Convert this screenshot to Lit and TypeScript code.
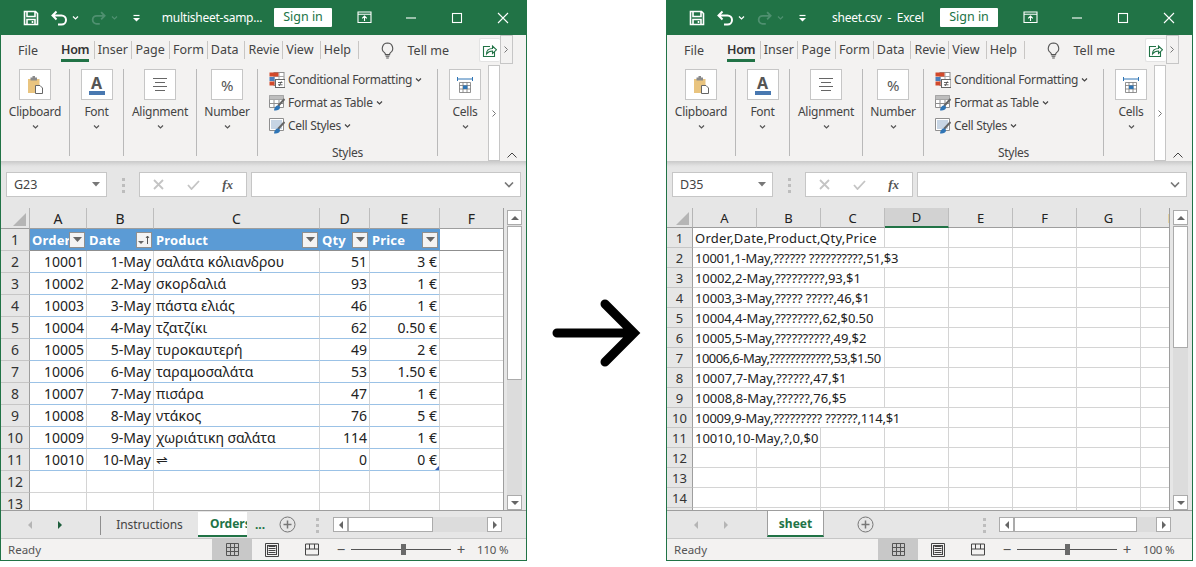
import { LitElement, html, css, svg, nothing } from "lit";
import { customElement, property } from "lit/decorators.js";

type Cell = { t?: string; k?: string; span?: number; filter?: string; ls?: number };
interface Cfg {
  title: string; zoom: string; thumbV: number; sliderX: number;
  nextDim: boolean; cols: number[]; headW: number; headH: number; rowH: number;
  letters: string[]; sel: number; rows: Cell[][]; fs: number; name: string;
  tabs: "multi" | "single"; hsW: number; hsThumb: number; table: boolean;
}

const ic = {
  save: svg`<path d="M1.500 1.500h11l2 2v11h-13z M4 1.500v5h8v-5 M4 14.500v-5h8v5 M9.500 11v2" fill="none" stroke="currentColor" stroke-width="1.6"/>`,
  undo: svg`<path d="M5.500 1.500 1.500 5.500l4 4M2 5.500h8.500a4.500 4.500 0 0 1 0 9H7" fill="none" stroke="currentColor" stroke-width="2"/>`,
  caret: svg`<path d="M1 2.500 3.500 5 6 2.500" fill="none" stroke="currentColor" stroke-width="1.2"/>`,
  cust: svg`<path d="M0.500 1.500h6" stroke="currentColor" stroke-width="1.2"/><path d="M0 4h7L3.500 7.500z" fill="currentColor"/>`,
  disp: svg`<path d="M1 1h13v10.500H1zM1 3.200h13M7.500 10V5.200M5.200 7.300l2.300-2.300 2.300 2.300" fill="none" stroke="currentColor" stroke-width="1.1"/>`,
  min: svg`<path d="M1 6h10" stroke="currentColor" stroke-width="1.1"/>`,
  max: svg`<rect x="1.500" y="1.500" width="9" height="9" fill="none" stroke="currentColor" stroke-width="1.1"/>`,
  close: svg`<path d="M1 1l10 10M11 1 1 11" stroke="currentColor" stroke-width="1.1"/>`,
  bulb: svg`<path d="M7.500 1a5.300 5.300 0 0 0-3 9.600c.7.600.9 1.300.9 2h4.200c0-.7.200-1.400.9-2A5.300 5.300 0 0 0 7.500 1zM5.600 14.200h3.800M6.200 16h2.600" fill="none" stroke="#555" stroke-width="1.1"/>`,
  share: svg`<path d="M8 3.500H1.500v10h11V9" fill="none" stroke="#217346" stroke-width="1.1"/><path d="M4.500 11c0-4 2.500-5.500 6-5.500V3l4 3.800-4 3.700V8c-3 0-4.500 1-6 3z" fill="#fff" stroke="#217346" stroke-width="1.1"/>`,
  clip: svg`<rect x="1" y="4" width="11.500" height="14" fill="#e9c47f"/><rect x="3.500" y="2.500" width="6.500" height="3" fill="#8a8a8a"/><rect x="5.500" y="1" width="2.500" height="2.500" fill="#8a8a8a"/><path d="M8.500 10.500h4.500l2.500 2.500v5.500h-7z" fill="#fff" stroke="#666" stroke-width="1"/>`,
  align: svg`<path d="M1 1.500h14M3 5.500h10M1 9.500h14M3 13.500h10" stroke="#666" stroke-width="1"/>`,
  cond: svg`<rect x="5" y=".5" width="10" height="13" fill="#fff" stroke="#8f8f8f"/><path d="M5 4.500h10M5 9h10M10 .5v13" stroke="#a8a8a8"/><rect x=".5" y=".5" width="9" height="4" fill="#d2492a"/><rect x=".5" y="5" width="5" height="4" fill="#4a7ebb"/><rect x=".5" y="9.500" width="5" height="4" fill="#d2492a"/><rect x="6.500" y="7.500" width="9.500" height="8" fill="#fff" stroke="#666"/><path d="M9 10.500h4.500M9 12.800h4.500M12.400 9.400l-2.200 4.600" stroke="#444" stroke-width=".8"/>`,
  table: svg`<path d="M.5.5h14v12H.5zM.5 4.500h14M.5 8.500h14M5 .5v12M10 .5v12" fill="#fff" stroke="#8f8f8f"/><rect x=".5" y=".5" width="14" height="4" fill="#bdbdbd"/><path d="M15.500 4 9 11" stroke="#666" stroke-width="2"/><path d="M5 15.500c0-3 2-5 4-5s2.500 2 1.500 3.500-3.500 1.500-5.500 1.500z" fill="#2f75b5"/>`,
  style: svg`<path d="M.5.5h14v12H.5z" fill="#fff" stroke="#8f8f8f"/><rect x="2" y="2" width="11" height="9" fill="#c7d5e4"/><path d="M15.500 4 9 11" stroke="#666" stroke-width="2"/><path d="M5 15.500c0-3 2-5 4-5s2.500 2 1.500 3.500-3.500 1.500-5.500 1.500z" fill="#2f75b5"/>`,
  cells: svg`<path d="M.5 1v4M15.500 1v4M1 3h14" stroke="#2f75b5" stroke-width="1"/><path d="M2.500 6.500h11v10h-11zM2.500 9.500h11M2.500 13h11M6 6.500v10M10 6.500v10" fill="#fff" stroke="#777" stroke-width=".8"/><rect x="6" y="9.500" width="4.500" height="3.500" fill="#2f75b5"/>`,
  normal: svg`<path d="M.5.5h12v12H.5zM.5 4.500h12M.5 8.500h12M4.500.5v12M8.500.5v12" fill="none" stroke="#555"/>`,
  layout: svg`<path d="M.5.5h13v13H.5z" fill="none" stroke="#444"/><path d="M3.500 3.500h7M3.500 5.500h7M3.500 7.500h7M3.500 9.500h7" stroke="#444"/><rect x="2.500" y="2.500" width="9" height="9" fill="none" stroke="#444"/>`,
  brk: svg`<path d="M.5 1h13v11H.5zM.5 6h13M4.500 1v5M9.500 1v5" fill="none" stroke="#444"/>`,
};

const icon = (body: unknown, w: number, h: number, cls = "") =>
  html`<svg class=${cls} width=${w} height=${h} viewBox="0 0 ${w} ${h}">${body}</svg>`;

const L: [string, string, string, string, string][] = [
  ["10001", "1-May", "σαλάτα κόλιανδρου", "51", "3 €"],
  ["10002", "2-May", "σκορδαλιά", "93", "1 €"],
  ["10003", "3-May", "πάστα ελιάς", "46", "1 €"],
  ["10004", "4-May", "τζατζίκι", "62", "0.50 €"],
  ["10005", "5-May", "τυροκαυτερή", "49", "2 €"],
  ["10006", "6-May", "ταραμοσαλάτα", "53", "1.50 €"],
  ["10007", "7-May", "πισάρα", "47", "1 €"],
  ["10008", "8-May", "ντάκος", "76", "5 €"],
  ["10009", "9-May", "χωριάτικη σαλάτα", "114", "1 €"],
  ["10010", "10-May", "⇌", "0", "0 €"],
];

const leftRows: Cell[][] = [
  [
    { t: "Order", k: "th", filter: "f" }, { t: "Date", k: "th", filter: "s" },
    { t: "Product", k: "th", filter: "f" }, { t: "Qty", k: "th", filter: "f" },
    { t: "Price", k: "th", filter: "f" }, { k: "hl" },
  ],
  ...L.map((r, i) => [
    { t: r[0], k: "r tbl" }, { t: r[1], k: "r tbl" }, { t: r[2], k: "tbl" },
    { t: r[3], k: "r tbl" }, { t: r[4], k: i === 9 ? "r tbl fh" : "r tbl" }, { k: "" },
  ]),
  Array.from({ length: 6 }, () => ({})),
  Array.from({ length: 6 }, () => ({})),
];

const R: [string, number, number][] = [
  ["Order,Date,Product,Qty,Price", 3, 0.25],
  ["10001,1-May,?????? ??????????,51,$3", 4, -0.23],
  ["10002,2-May,?????????,93,$1", 3, -0.1],
  ["10003,3-May,????? ?????,46,$1", 3, -0.1],
  ["10004,4-May,????????,62,$0.50", 3, -0.1],
  ["10005,5-May,??????????,49,$2", 3, -0.1],
  ["10006,6-May,????????????,53,$1.50", 3, -0.55],
  ["10007,7-May,??????,47,$1", 3, 0],
  ["10008,8-May,??????,76,$5", 3, 0],
  ["10009,9-May,????????? ??????,114,$1", 4, -0.23],
  ["10010,10-May,?,0,$0", 2, 0],
];
const rightRows: Cell[][] = [
  ...R.map(([t, span, ls]) => [
    { t, span, ls, k: "sp" } as Cell,
    ...Array.from({ length: 8 - span }, () => ({})),
  ]),
  ...Array.from({ length: 4 }, () => Array.from({ length: 8 }, () => ({}))),
];

const LEFT: Cfg = {
  title: "multisheet-samp...", zoom: "110 %", thumbV: 154, sliderX: 50, nextDim: false,
  cols: [57, 67, 166, 50, 70, 64], headW: 29, headH: 21, rowH: 22,
  letters: ["A", "B", "C", "D", "E", "F"], sel: -1, rows: leftRows, fs: 14, name: "G23",
  tabs: "multi", hsW: 169, hsThumb: 85, table: true,
};
const RIGHT: Cfg = {
  title: "sheet.csv  -  Excel", zoom: "100 %", thumbV: 122, sliderX: 48, nextDim: true,
  cols: [64, 64, 64, 64, 64, 64, 64, 64], headW: 26, headH: 20, rowH: 20,
  letters: ["A", "B", "C", "D", "E", "F", "G", "H"], sel: 3, rows: rightRows, fs: 13, name: "D35",
  tabs: "single", hsW: 172, hsThumb: 123, table: false,
};

@customElement("excel-window")
class ExcelWindow extends LitElement {
  @property({ attribute: false }) cfg!: Cfg;

  static styles = css`
    :host { display: block; width: 527px; height: 561px; box-sizing: border-box; border: 1px solid #217346; border-top: 0; background: #e6e6e6; font-family: "Noto Sans", sans-serif; color: #444; overflow: hidden; }
    svg { display: block; flex: none; }
    .tbar { display: flex; align-items: center; height: 35px; padding-left: 22px; background: #217346; color: #fff; }
    .mr12 { margin-right: 12px; } .mr3 { margin-right: 3px; } .mr11 { margin-right: 11px; } .mr5 { margin-right: 5px; } .mr15 { margin-right: 15px; } .mr10 { margin-right: 10px; } .mr25 { margin-right: 25px; } .mr33 { margin-right: 33px; } .mr34 { margin-right: 34px; }
    .dim { color: #4f9070; }
    .title { width: 124px; text-align: center; font-size: 12px; white-space: pre; letter-spacing: -.25px; }
    .sign { width: 58px; height: 19px; background: #fff; color: #217346; font-size: 12.500px; line-height: 18px; text-align: center; border-radius: 1px; }
    .rtabs { display: flex; align-items: center; height: 27px; box-sizing: border-box; padding-top: 3px; background: #f3f2f1; font-size: 12.500px; position: relative; }
    .file { width: 56px; padding-left: 17px; box-sizing: border-box; }
    .rt { width: 37.700px; height: 18px; line-height: 18px; padding-left: 3px; box-sizing: border-box; border-right: 1px solid #c8c6c4; overflow: hidden; white-space: nowrap; position: relative; }
    .rt.on { color: #333; font-weight: 600; padding-left: 4px; letter-spacing: -.3px; overflow: visible; }
    .rt.on::after { content: ""; position: absolute; left: 4px; width: 28px; top: 18px; height: 3px; background: #217346; }
    .bulb { margin-left: 21px; }
    .tell { margin-left: 13px; width: 71px; }
    .share { width: 21px; height: 24px; background: #fff; border: 1px solid #e3e3e3; border-right: 0; border-radius: 2px; display: flex; align-items: center; justify-content: center; box-sizing: border-box; }
    .more { width: 13px; height: 29px; margin-top: -1px; box-sizing: border-box; background: #f3f2f1; border: 1px solid #c6c6c6; display: flex; align-items: center; justify-content: center; color: #777; z-index: 1; }
    .ribbon { display: flex; height: 99px; background: #f3f2f1; padding-top: 7px; box-sizing: border-box; font-size: 12px; letter-spacing: -.25px; position: relative; }
    .g { height: 87px; box-sizing: border-box; border-right: 1px solid #b9b9b9; display: flex; flex-direction: column; align-items: center; }
    .gb { width: 32px; height: 31px; box-sizing: border-box; background: #fff; border: 1px solid #c6c6c6; display: flex; align-items: center; justify-content: center; color: #555; }
    .gl { margin-top: 4px; line-height: 16px; }
    .gc { margin-top: 3px; color: #555; }
    .fa { font: 700 16px/16px "Noto Sans", sans-serif; color: #555; }
    .fabar { width: 16px; height: 4px; background: #4878b0; }
    .fabox { flex-direction: column; }
    .pc { font-size: 15px; color: #555; }
    .gs { align-items: flex-start; padding-left: 11px; }
    .sr { height: 23px; margin-top: -1px; margin-bottom: 1px; display: flex; align-items: center; gap: 3px; white-space: nowrap; }
    .sr span { letter-spacing: -.3px; }
    .slab { align-self: center; margin-top: auto; margin-bottom: -5px; margin-right: 11px; line-height: 16px; }
    .gcells { padding-left: 4px; border-right: 0; }
    .rsc { width: 12px; height: 96px; margin-top: -4px; box-sizing: border-box; background: #fff; border: 1px solid #c6c6c6; display: flex; align-items: center; justify-content: center; color: #777; }
    .coll { margin: 83px 0 0 7px; color: #444; }
    .fb { height: 47px; box-sizing: border-box; padding: 11px 5px 0; display: flex; background: linear-gradient(#c9c9c9, #e3e3e3 5px, #e6e6e6 7px); }
    .nm { width: 101px; height: 25px; box-sizing: border-box; background: #fff; border: 1px solid #c6c6c6; display: flex; align-items: center; justify-content: space-between; padding: 0 6px 0 7px; font-size: 12.500px; color: #444; }
    .drag { width: 32px; height: 25px; display: flex; align-items: center; justify-content: center; }
    .fxb { width: 108px; height: 25px; box-sizing: border-box; background: #fff; border: 1px solid #c6c6c6; display: flex; align-items: center; justify-content: space-between; padding: 0 13px; }
    .fx { font: italic 600 13px "Liberation Serif", serif; color: #555; }
    .inp { width: 270px; height: 25px; margin-left: 4px; box-sizing: border-box; background: #fff; border: 1px solid #c6c6c6; display: flex; align-items: center; justify-content: flex-end; padding-right: 6px; color: #555; }
    .main { display: flex; height: 302px; }
    .sheet { width: 504px; height: 302px; box-sizing: border-box; border-right: 1px solid #9e9e9e; overflow: hidden; background: #fff; }
    .grid { display: grid; width: max-content; font-family: "Noto Sans", sans-serif; color: #222; }
    .grid > div { box-sizing: border-box; min-width: 0; }
    .corner { background: #e6e6e6; border-bottom: 1px solid #9e9e9e; border-right: 1px solid #b5b5b5; display: flex; align-items: flex-end; justify-content: flex-end; padding: 0 3px 2px 0; }
    .ch { background: #e6e6e6; border-bottom: 1px solid #9e9e9e; border-right: 1px solid #bdbdbd; display: flex; align-items: center; justify-content: center; color: #222; }
    .ch.sel { background: #d2d2d2; border-bottom: 2px solid #217346; }
    .rh { background: #e6e6e6; border-bottom: 1px solid #c6c6c6; border-right: 1px solid #9e9e9e; display: flex; align-items: center; justify-content: center; color: #333; overflow: hidden; }
    .c { border-right: 1px solid #d4d4d4; border-bottom: 1px solid #d4d4d4; padding: 0 2px; display: flex; align-items: center; white-space: nowrap; overflow: hidden; position: relative; }
    .c.r { justify-content: flex-end; }
    .c.tbl { border-bottom-color: #9bc2e6; }
    .c.hl { border-bottom-color: #8f8f8f; }
    .c.th { background: #5b9bd5; color: #fff; font-weight: 700; font-size: 13px; letter-spacing: .2px; border-right-color: #5b9bd5; border-bottom-color: #8f8f8f; padding: 0 1px 0 2px; }
    .c.th .tx { flex: 1; min-width: 0; overflow: hidden; }
    .c.fh::after { content: ""; position: absolute; right: 0; bottom: 0; border: 2px solid transparent; border-right-color: #3a5fb5; border-bottom-color: #3a5fb5; }
    .fbtn { width: 16px; height: 16px; box-sizing: border-box; background: #f3f3f3; border: 1px solid #8f8f8f; display: flex; align-items: center; justify-content: center; flex: none; }
    .vs { width: 22px; padding: 2px 0 0 3px; box-sizing: border-box; }
    .vt { width: 15px; height: 300px; background: #dcdcdc; position: relative; display: flex; flex-direction: column; justify-content: space-between; }
    .sb { width: 15px; height: 15px; box-sizing: border-box; background: #fff; border: 1px solid #ababab; display: flex; align-items: center; justify-content: center; flex: none; }
    .vth { width: 15px; box-sizing: border-box; background: #fff; border: 1px solid #ababab; position: absolute; top: 16px; left: 0; }
    .tabs { height: 28px; box-sizing: border-box; border-top: 1px solid #9e9e9e; display: flex; position: relative; background: #e6e6e6; }
    .tleft { width: 332px; display: flex; align-items: center; height: 27px; font-size: 12px; }
    .nav { width: 100px; height: 19px; margin-top: 1px; display: flex; align-items: center; box-sizing: border-box; border-right: 1px solid #8f8f8f; padding-left: 26px; gap: 24px; }
    .single .nav { border-right-color: transparent; }
    .t1 { width: 97px; text-align: center; color: #444; letter-spacing: -.1px; }
    .act { margin-top: -1px; height: 25px; box-sizing: border-box; background: #fff; border-bottom: 2px solid #217346; color: #217346; font-weight: 700; display: flex; align-items: center; padding-left: 12px; overflow: hidden; white-space: nowrap; }
    .single .act { justify-content: center; padding: 0; border-left: 1px solid #9e9e9e; border-right: 1px solid #9e9e9e; margin-top: -1px; height: 26px; }
    .dots3 { color: #217346; font-weight: 700; margin-left: 8px; }
    .add { width: 17px; height: 17px; flex: none; }
    .hdots { flex: none; }
    .hs { height: 15px; margin-top: 6px; background: #dcdcdc; display: flex; justify-content: space-between; position: relative; }
    .hth { position: absolute; left: 15px; top: 0; height: 15px; box-sizing: border-box; background: #fff; border: 1px solid #ababab; }
    .status { height: 22px; box-sizing: border-box; border-top: 1px solid #c6c6c6; background: #f3f2f1; display: flex; align-items: center; font-size: 11.500px; color: #555; }
    .ready { width: 211px; padding-left: 7px; box-sizing: border-box; }
    .vw { width: 40px; height: 21px; display: flex; align-items: center; justify-content: center; }
    .vw.on { background: #c8c8c8; }
    .pm { width: 14px; text-align: center; font-size: 15px; line-height: 15px; color: #555; }
    .minus { margin-left: 2px; }
    .sl { width: 100px; height: 13px; margin: 0 3px; display: flex; align-items: center; position: relative; }
    .sl i { display: block; width: 100%; height: 1px; background: #555; }
    .sl b { position: absolute; top: 1px; width: 5px; height: 11px; background: #6a6a6a; }
    .zm { margin-left: 9px; font-size: 11.500px; letter-spacing: -.2px; }
  `;

  private tri(dir: string) {
    const p: Record<string, string> = { u: "M0 5h8L4 1z", d: "M0 1h8L4 5z", l: "M5 0v8L1 4z", r: "M1 0v8l4-4z" };
    const s = dir === "u" || dir === "d" ? [8, 6] : [6, 8];
    return html`<svg width=${s[0]} height=${s[1]} viewBox="0 0 ${s[0]} ${s[1]}"><path d=${p[dir]} fill="#666"/></svg>`;
  }
  private filt(kind: string) {
    return html`<span class="fbtn">${kind === "s"
      ? html`<svg width="12" height="10" viewBox="0 0 12 10"><path d="M0 6h6L3 9z" fill="#666"/><path d="M9.500 9V1M8 3l1.500-2L11 3" fill="none" stroke="#555"/></svg>`
      : html`<svg width="9" height="5" viewBox="0 0 9 5"><path d="M0 0h9L4.500 5z" fill="#666"/></svg>`}</span>`;
  }
  private chev() { return icon(ic.caret, 7, 7, "gc"); }
  private vdots() {
    return html`<svg class="hdots" width="3" height="16" viewBox="0 0 3 16"><path d="M0 1h3v3H0zM0 7h3v3H0zM0 13h3v3H0z" fill="#bdbdbd"/></svg>`;
  }

  render() {
    const c = this.cfg;
    const gridCols = [c.headW, ...c.cols].map((n) => `${n}px`).join(" ");
    const gridRows = [c.headH, ...c.rows.map(() => c.rowH)].map((n) => `${n}px`).join(" ");
    return html`
      <div class="tbar">
        ${icon(ic.save, 16, 16, "mr12")}
        ${icon(ic.undo, 18, 16, "mr3")}
        ${icon(ic.caret, 7, 7, "mr11")}
        <svg class="mr5 dim" width="16" height="16" viewBox="0 0 18 16"><g transform="translate(18 0) scale(-1 1)">${ic.undo}</g></svg>
        ${icon(ic.caret, 7, 7, "mr15 dim")}
        ${icon(ic.cust, 7, 8, "mr10")}
        <div class="title">${c.title}</div>
        <div class="sign mr25">Sign in</div>
        ${icon(ic.disp, 15, 13, "mr33")}
        ${icon(ic.min, 12, 12, "mr34")}
        ${icon(ic.max, 12, 12, "mr34")}
        ${icon(ic.close, 12, 12)}
      </div>
      <div class="rtabs">
        <div class="file">File</div>
        <div class="rt on">Hom</div>
        ${["Inser", "Page", "Form", "Data", "Revie", "View", "Help"].map((t) => html`<div class="rt">${t}</div>`)}
        ${icon(ic.bulb, 15, 17, "bulb")}
        <div class="tell">Tell me</div>
        <div class="share">${icon(ic.share, 15, 15)}</div>
        <div class="more"><svg width="4" height="7" viewBox="0 0 4 7"><path d="M.5.5l3 3-3 3" fill="none" stroke="currentColor"/></svg></div>
      </div>
      <div class="ribbon">
        <div class="g" style="width:69px"><div class="gb">${icon(ic.clip, 16, 19)}</div><div class="gl">Clipboard</div>${this.chev()}</div>
        <div class="g" style="width:54px"><div class="gb fabox"><span class="fa">A</span><span class="fabar"></span></div><div class="gl">Font</div>${this.chev()}</div>
        <div class="g" style="width:73px"><div class="gb">${icon(ic.align, 16, 15)}</div><div class="gl">Alignment</div>${this.chev()}</div>
        <div class="g" style="width:61px"><div class="gb"><span class="pc">%</span></div><div class="gl">Number</div>${this.chev()}</div>
        <div class="g gs" style="width:180px">
          <div class="sr">${icon(ic.cond, 16, 16)}<span>Conditional Formatting</span>${icon(ic.caret, 7, 7)}</div>
          <div class="sr">${icon(ic.table, 16, 16)}<span>Format as Table</span>${icon(ic.caret, 7, 7)}</div>
          <div class="sr">${icon(ic.style, 16, 16)}<span>Cell Styles</span>${icon(ic.caret, 7, 7)}</div>
          <div class="slab">Styles</div>
        </div>
        <div class="g gcells" style="width:50px"><div class="gb">${icon(ic.cells, 16, 17)}</div><div class="gl">Cells</div>${this.chev()}</div>
        <div class="rsc"><svg width="4" height="7" viewBox="0 0 4 7"><path d="M.5.5l3 3-3 3" fill="none" stroke="currentColor"/></svg></div>
        <svg class="coll" width="10" height="6" viewBox="0 0 10 6"><path d="M.5 5.500 5 1l4.500 4.500" fill="none" stroke="currentColor"/></svg>
      </div>
      <div class="fb">
        <div class="nm"><span>${c.name}</span><svg width="8" height="5" viewBox="0 0 8 5"><path d="M0 0h8L4 4.500z" fill="#777"/></svg></div>
        <div class="drag">${this.vdots()}</div>
        <div class="fxb">
          <svg width="11" height="11" viewBox="0 0 11 11"><path d="M1 1l9 9M10 1l-9 9" stroke="#c4c4c4" stroke-width="1.800"/></svg>
          <svg width="13" height="10" viewBox="0 0 13 10"><path d="M1 5l3.500 4L12 1" fill="none" stroke="#c4c4c4" stroke-width="1.800"/></svg>
          <span class="fx">fx</span>
        </div>
        <div class="inp"><svg width="10" height="6" viewBox="0 0 10 6"><path d="M1 .5l4 4 4-4" fill="none" stroke="#777" stroke-width="1.600"/></svg></div>
      </div>
      <div class="main">
        <div class="sheet">
          <div class="grid" style="grid-template-columns:${gridCols};grid-template-rows:${gridRows};font-size:${c.fs}px">
            <div class="corner"><svg width="13" height="13" viewBox="0 0 13 13"><path d="M13 0v13H0z" fill="#b5b5b5"/></svg></div>
            ${c.letters.map((l, i) => html`<div class="ch ${i === c.sel ? "sel" : ""}">${l}</div>`)}
            ${c.rows.map((row, i) => html`
              <div class="rh">${i + 1}</div>
              ${row.map((cell) => html`<div class="c ${cell.k ?? ""}" style=${cell.span ? `grid-column:span ${cell.span};letter-spacing:${cell.ls ?? 0}px` : ""}>
                ${cell.filter ? html`<span class="tx">${cell.t}</span>${this.filt(cell.filter)}` : cell.t ?? nothing}
              </div>`)}
            `)}
          </div>
        </div>
        <div class="vs"><div class="vt">
          <div class="sb">${this.tri("u")}</div>
          <div class="vth" style="height:${c.thumbV}px"></div>
          <div class="sb">${this.tri("d")}</div>
        </div></div>
      </div>
      <div class="tabs ${c.tabs}">
        <div class="tleft">
          <div class="nav">
            <svg width="6" height="8" viewBox="0 0 6 8"><path d="M5 0v8L1 4z" fill="#b5b5b5"/></svg>
            <svg width="6" height="8" viewBox="0 0 6 8"><path d="M1 0v8l4-4z" fill=${c.nextDim ? "#b5b5b5" : "#1e5e3c"}/></svg>
          </div>
          ${c.tabs === "multi"
            ? html`<div class="t1">Instructions</div>
                <div class="act" style="width:49px">Orders</div>
                <span class="dots3">...</span>
                <svg class="add" style="margin-left:14px" viewBox="0 0 17 17"><circle cx="8.500" cy="8.500" r="7.500" fill="none" stroke="#777"/><path d="M8.500 4.500v8M4.500 8.500h8" stroke="#777" stroke-width="1.500"/></svg>
                <span style="margin-left:20px">${this.vdots()}</span>`
            : html`<div class="act" style="width:57px">sheet</div>
                <svg class="add" style="margin-left:33px" viewBox="0 0 17 17"><circle cx="8.500" cy="8.500" r="7.500" fill="none" stroke="#777"/><path d="M8.500 4.500v8M4.500 8.500h8" stroke="#777" stroke-width="1.500"/></svg>
                <span style="margin-left:109px">${this.vdots()}</span>`}
        </div>
        <div class="hs" style="width:${c.hsW}px">
          <div class="sb">${this.tri("l")}</div>
          <div class="hth" style="width:${c.hsThumb}px"></div>
          <div class="sb">${this.tri("r")}</div>
        </div>
      </div>
      <div class="status">
        <div class="ready">Ready</div>
        <div class="vw on">${icon(ic.normal, 13, 13)}</div>
        <div class="vw">${icon(ic.layout, 14, 14)}</div>
        <div class="vw">${icon(ic.brk, 14, 13)}</div>
        <span class="pm minus">−</span>
        <div class="sl"><i></i><b style="left:${c.sliderX}px"></b></div>
        <span class="pm">+</span>
        <span class="zm">${c.zoom}</span>
      </div>
    `;
  }
}

@customElement("app-root")
export class AppRoot extends LitElement {
  static styles = css`
    :host { display: flex; width: 1196px; height: 567px; background: #fff; overflow: hidden; }
    .mid { width: 139px; display: flex; justify-content: center; padding-top: 293px; box-sizing: border-box; }
  `;
  render() {
    return html`
      <excel-window .cfg=${LEFT}></excel-window>
      <div class="mid">
        <svg width="100" height="80" viewBox="0 0 100 80"><path d="M10 40H86M58 11l29 29-29 29" fill="none" stroke="#000" stroke-width="9" stroke-linecap="round"/></svg>
      </div>
      <excel-window .cfg=${RIGHT}></excel-window>
    `;
  }
}
void ExcelWindow;
